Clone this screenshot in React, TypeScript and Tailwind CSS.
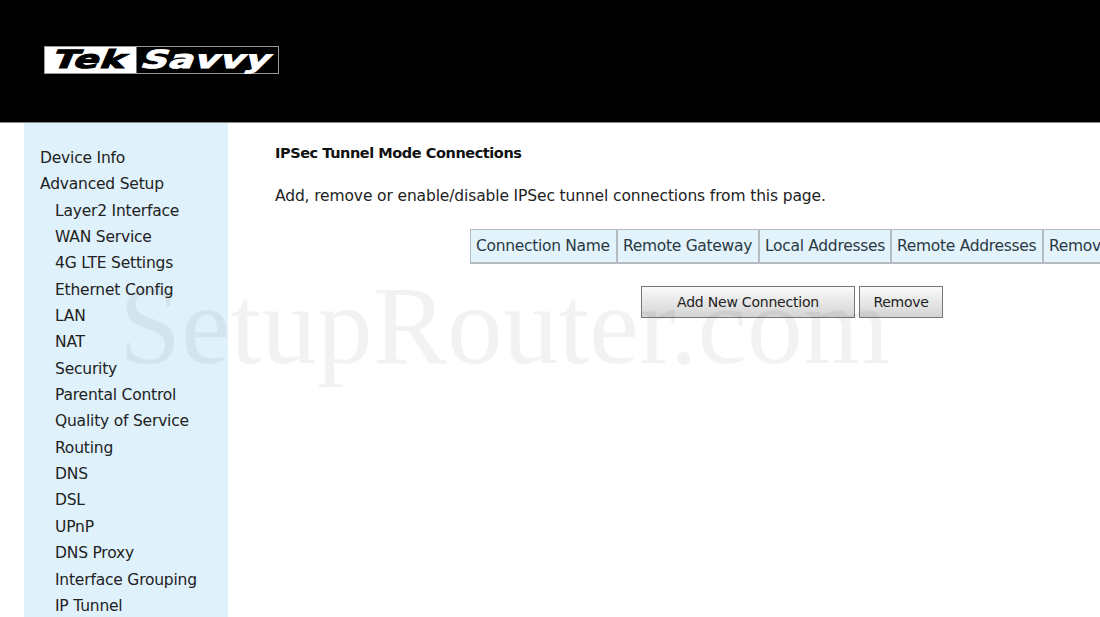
const items: [string, boolean][] = [
  ["Device Info", false],
  ["Advanced Setup", false],
  ["Layer2 Interface", true],
  ["WAN Service", true],
  ["4G LTE Settings", true],
  ["Ethernet Config", true],
  ["LAN", true],
  ["NAT", true],
  ["Security", true],
  ["Parental Control", true],
  ["Quality of Service", true],
  ["Routing", true],
  ["DNS", true],
  ["DSL", true],
  ["UPnP", true],
  ["DNS Proxy", true],
  ["Interface Grouping", true],
  ["IP Tunnel", true],
];

const columns: [string, string][] = [
  ["Connection Name", "w-[147px]"],
  ["Remote Gateway", "w-[142px]"],
  ["Local Addresses", "w-[132px]"],
  ["Remote Addresses", "w-[152px]"],
  ["Remove", "w-[80px]"],
];

export default function App() {
  return (
    <div className="relative h-[617px] w-[1100px] overflow-hidden bg-white font-['DejaVu_Sans',sans-serif] text-[#222]">
      <header className="flex h-[123px] items-start border-b border-[#888] bg-black pl-[44px] pt-[46px]">
        <div className="flex h-[28px] w-[235px] border border-[#999] text-[25px] font-bold leading-[25px]">
          <span className="flex w-[91px] justify-center bg-white text-black">
            <span className="inline-block origin-center -skew-x-[16deg] scale-x-[1.5] tracking-[0.5px] [-webkit-text-stroke:1px_#000]">Tek</span>
          </span>
          <span className="flex flex-1 justify-center border-l border-[#777] bg-black text-white">
            <span className="inline-block origin-center -skew-x-[16deg] scale-x-[1.5] tracking-[0.5px] [-webkit-text-stroke:0.8px_#fff]">Savvy</span>
          </span>
        </div>
      </header>
      <div className="flex h-[494px]">
        <nav className="ml-[24px] h-full w-[204px] shrink-0 bg-[#dff1fb] pt-[22px] text-[15.5px] leading-[26.35px] tracking-[-0.2px]">
          {items.map(([label, sub]) => (
            <div key={label} className={sub ? "whitespace-nowrap pl-[31px]" : "whitespace-nowrap pl-[16px]"}>
              {label}
            </div>
          ))}
        </nav>
        <main className="min-w-0 flex-1 pl-[47px] pt-[20px]">
          <h1 className="text-[14.5px] font-bold leading-[20px] tracking-[-0.44px] text-[#111]">IPSec Tunnel Mode Connections</h1>
          <p className="mt-[23px] whitespace-nowrap text-[15.5px] leading-[20px] tracking-[-0.13px]">
            Add, remove or enable/disable IPSec tunnel connections from this page.
          </p>
          <div className="ml-[195px] mt-[23px] flex h-[35px] w-[653px] border-b-2 border-l border-t border-[#b5bcc0] bg-[#e3f3fc]">
            {columns.map(([label, width]) => (
              <div
                key={label}
                className={`${width} flex shrink-0 items-center whitespace-nowrap border-r-2 border-[#b5bcc0] pl-[5px] pt-[2px] text-[15.5px] tracking-[-0.3px] text-[#2a3a44]`}
              >
                {label}
              </div>
            ))}
          </div>
          <div className="ml-[366px] mt-[22px] flex gap-[4px]">
            <button className="h-[32px] w-[214px] border border-[#777] bg-gradient-to-b from-[#fafafa] to-[#d4d4d4] text-[14px] tracking-[-0.22px] text-[#222]">
              Add New Connection
            </button>
            <button className="h-[32px] w-[84px] border border-[#777] bg-gradient-to-b from-[#fafafa] to-[#d4d4d4] text-[14px] tracking-[-0.3px] text-[#222]">
              Remove
            </button>
          </div>
        </main>
      </div>
      <div className="pointer-events-none absolute left-[119px] top-[262px] whitespace-nowrap font-['Liberation_Serif',serif] text-[111.4px] leading-[128px] text-black/[0.05]">
        SetupRouter.com
      </div>
    </div>
  );
}
